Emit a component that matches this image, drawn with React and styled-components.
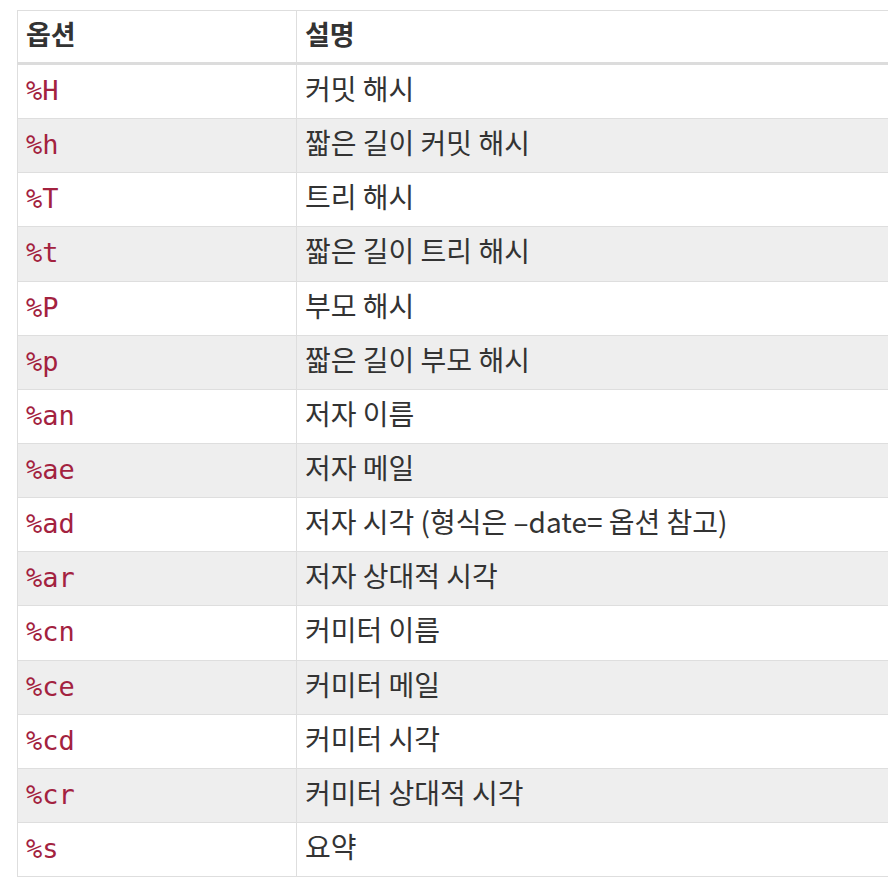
import React from 'react'
import styled, { createGlobalStyle } from 'styled-components'

const GlobalStyle = createGlobalStyle`
  body {
    margin: 0;
    background: #fff;
    overflow: hidden;
    font-family: "Noto Sans CJK KR", "Noto Sans", sans-serif;
    color: #333;
  }
`

const Page = styled.div`
  padding: 10px 0 0 17px;
`

const Table = styled.table`
  width: 920px;
  border-collapse: collapse;
  border: 1px solid #dedede;
  font-size: 28px;
`

const HeadCell = styled.th`
  text-align: left;
  font-weight: 700;
  font-size: 27px;
  vertical-align: top;
  padding: 5px 8px 10px;
  line-height: 36px;
  height: 36px;
  border: 1px solid #dedede;
  border-bottom: 3px solid #dcdcdc;
  width: ${p => p.$width || 'auto'};
`

const Row = styled.tr`
  background: ${p => (p.$shaded ? '#eeeeee' : '#fff')};
`

const Cell = styled.td`
  vertical-align: top;
  padding: 5px 8px 12px;
  line-height: 36px;
  height: 36.15px;
  border: 1px solid #dedede;
`

const Code = styled.code`
  font-family: "DejaVu Sans Mono", "Liberation Mono", monospace;
  font-size: 27px;
  line-height: 1;
  color: #a3223f;
`

const rows = [
  ['%H', '커밋 해시'],
  ['%h', '짧은 길이 커밋 해시'],
  ['%T', '트리 해시'],
  ['%t', '짧은 길이 트리 해시'],
  ['%P', '부모 해시'],
  ['%p', '짧은 길이 부모 해시'],
  ['%an', '저자 이름'],
  ['%ae', '저자 메일'],
  ['%ad', '저자 시각 (형식은 –date= 옵션 참고)'],
  ['%ar', '저자 상대적 시각'],
  ['%cn', '커미터 이름'],
  ['%ce', '커미터 메일'],
  ['%cd', '커미터 시각'],
  ['%cr', '커미터 상대적 시각'],
  ['%s', '요약'],
]

export default function App() {
  return (
    <Page>
      <GlobalStyle />
      <Table>
        <thead>
          <tr>
            <HeadCell $width="262px">옵션</HeadCell>
            <HeadCell>설명</HeadCell>
          </tr>
        </thead>
        <tbody>
          {rows.map(([opt, desc], i) => (
            <Row key={opt} $shaded={i % 2 === 1}>
              <Cell>
                <Code>{opt}</Code>
              </Cell>
              <Cell>{desc}</Cell>
            </Row>
          ))}
        </tbody>
      </Table>
    </Page>
  )
}
